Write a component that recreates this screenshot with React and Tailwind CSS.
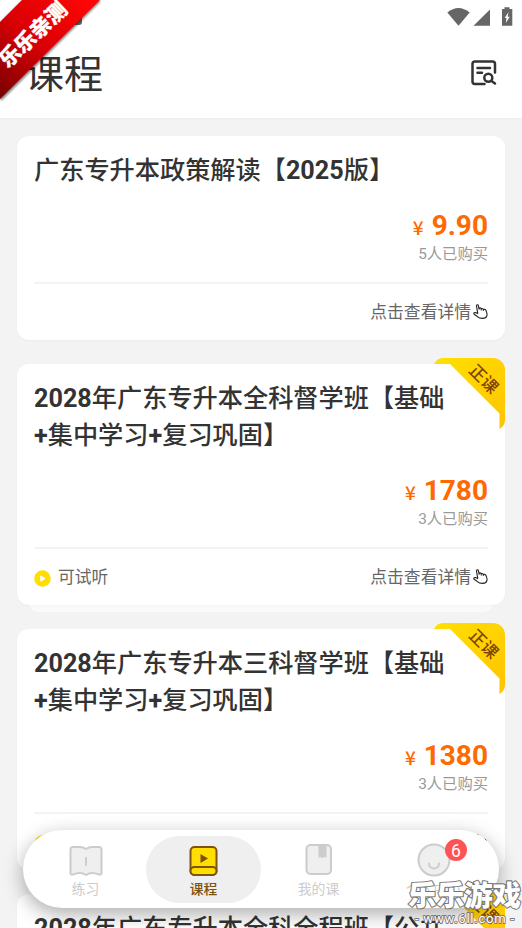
import React from "react";

const courses = [
  { title: "广东专升本政策解读【2025版】", price: "9.90", count: 5 },
  { title: "2028年广东专升本全科督学班【基础+集中学习+复习巩固】", price: "1780", count: 3, formal: true },
  { title: "2028年广东专升本三科督学班【基础+集中学习+复习巩固】", price: "1380", count: 3, formal: true },
  { title: "2028年广东专升本全科全程班【公共课+专业课】", price: "2380", count: 3, formal: true },
];

function HandIcon() {
  return (
    <svg className="-mt-[3px] h-[15px] w-[15px]" viewBox="0 0 15 15" fill="none" stroke="#222" strokeWidth="1.1" strokeLinecap="round" strokeLinejoin="round">
      <path d="M4.700 9.200L3.500 2C3.300.6 5.100.3 5.400 1.700L6.100 5.300V4.500C6.400 3.500 8 3.700 8.200 4.700V6V5C8.600 4.200 10 4.400 10.300 5.400V6.500V5.700C10.800 5 12.400 5.200 13 6.500C13.800 8.200 14.300 10 13.900 11.600C13.400 13.500 11.600 14.400 9.600 14.400C7 14.400 5.400 13.600 4 12.300L1.200 10.300C.3 9.300 1.200 8.200 2.400 8.500L4.700 9.600" />
    </svg>
  );
}

function PlayBadge() {
  return (
    <svg className="h-[17px] w-[17px]" viewBox="0 0 17 17">
      <circle cx="8.500" cy="8.500" r="8.300" fill="#ffde00" />
      <path d="M6.700 5.900v5.200l4.300-2.600z" fill="#fff" stroke="#fff" strokeWidth="1" strokeLinejoin="round" />
    </svg>
  );
}

function CornerTag({ id }) {
  return (
    <svg className="absolute -top-[6px] right-0 h-[72px] w-[72px]" viewBox="0 0 72 72">
      <defs>
        <linearGradient id={id} x1="0" y1="0" x2="1" y2="1">
          <stop offset="0" stopColor="#ffe000" />
          <stop offset="1" stopColor="#ffc400" />
        </linearGradient>
      </defs>
      <path d="M1 6C3 2 6 0 10 0H60A12 12 0 0 1 72 12V62C72 66 70 69 66.500 71V55.500L17 6Z" fill={`url(#${id})`} />
      <text x="51" y="27" transform="rotate(45 51 21)" textAnchor="middle" fontSize="16.500" fontWeight="500" fill="#7d4307">正课</text>
    </svg>
  );
}

function Title({ text }) {
  return (
    <h2 className="w-[418px] text-[25.200px] leading-[37px] font-medium text-[#333]">
      {text.split(/([0-9+]+)/).map((part, i) => (i % 2 ? <span key={i} className="font-bold">{part}</span> : part))}
    </h2>
  );
}

function CourseCard({ course, index }) {
  return (
    <article className="relative shrink-0">
      {course.formal && <div className="absolute inset-x-[12px] -bottom-[7px] h-[19px] rounded-[12px] bg-[#fafafa]" />}
      <div className="relative rounded-[12px] bg-white px-[17px] pt-[16px] shadow-[0_1px_2px_rgba(0,0,0,0.03)]">
        <Title text={course.title} />
        <div className="mt-[20px] flex h-[34px] items-center justify-end text-[#ff6a00]">
          <span className="mr-[8px] font-['Noto_Sans_CJK_SC',sans-serif] text-[19px] leading-none font-medium">¥</span>
          <span className="text-[28px] leading-none font-bold">{course.price}</span>
        </div>
        <p className="mt-px flex h-[20px] items-center justify-end text-[15.300px] text-[#999]">{course.count}人已购买</p>
        <div className="mt-[18px] h-[2px] bg-[#f3f3f3]" />
        <div className="flex h-[56px] items-center pt-[2px] text-[16.800px] text-[#666]">
          {course.formal && (
            <div className="flex items-center gap-[7px]">
              <span className="mt-px"><PlayBadge /></span>
              <span>可试听</span>
            </div>
          )}
          <div className="ml-auto flex items-center gap-[2px]">
            <span>点击查看详情</span>
            <HandIcon />
          </div>
        </div>
      </div>
      {course.formal && <CornerTag id={`tag-${index}`} />}
    </article>
  );
}

function StatusBar() {
  return (
    <svg className="ml-auto h-[30px] w-[80px]" viewBox="442 0 80 30">
      <path d="M447.300 12.500Q458.500 3.500 469.700 12.500L458.500 25.700Z" fill="#666" />
      <path d="M473.500 25.700L490 9.500V25.700Z" fill="#666" />
      <path d="M504.500 7.300H509.500V9H512.300V25.700H502V9H504.500Z" fill="#666" />
      <path d="M508.500 12L504.700 18H506.500L505.800 23L509.800 16.700H507.700Z" fill="#fff" />
    </svg>
  );
}

function OrdersIcon() {
  return (
    <svg className="h-[26px] w-[26px]" viewBox="0 0 26 26" fill="none" stroke="#333" strokeWidth="2.500" strokeLinecap="round" strokeLinejoin="round">
      <path d="M13.500 24H4Q1.500 24 1.500 21.500V4Q1.500 1.500 4 1.500H21.500Q24 1.500 24 4V12.500" />
      <path d="M6.500 8H19M6.500 12.800H11" />
      <circle cx="17.300" cy="17.800" r="4" />
      <path d="M20.500 21L24 23.500" />
    </svg>
  );
}

function PracticeIcon() {
  return (
    <svg className="h-[32px] w-[34px]" viewBox="0 0 34 32" fill="#efefef" stroke="#ccc" strokeWidth="2" strokeLinejoin="round" strokeLinecap="round">
      <path d="M1.500 4.500Q1.500 2 4 2H11Q14 2 17 4Q20 2 23 2H30Q32.500 2 32.500 4.500V28Q32.500 30 30 29.500Q26 28 23 28Q20 28 17 30Q14 28 11 28Q8 28 4 29.500Q1.500 30 1.500 28Z" />
      <path d="M17 13V20" />
    </svg>
  );
}

function CourseIcon() {
  return (
    <svg className="h-[32px] w-[30px]" viewBox="0.5 0 30 32" fill="#ffde00" stroke="#7d5310" strokeWidth="2">
      <rect x="2" y="2" width="26" height="28" rx="4" />
      <rect x="2" y="22" width="26" height="8" rx="4" />
      <path d="M12 9V18L19.500 13.500Z" fill="#7d5310" stroke="none" />
    </svg>
  );
}

function MyCourseIcon() {
  return (
    <svg className="-mt-[2px] h-[32px] w-[28px]" viewBox="0 0 28 32">
      <rect x="1.500" y="1" width="24.500" height="29" rx="4" fill="#efefef" stroke="#ccc" strokeWidth="2" />
      <path d="M13.500 1.500H21.500V14L20 13L17.500 14L15 13L13.500 14Z" fill="#ccc" />
    </svg>
  );
}

function ProfileIcon() {
  return (
    <svg className="-mt-[3px] h-[34px] w-[34px]" viewBox="0 0 34 34" fill="none" stroke="#ccc" strokeWidth="2" strokeLinecap="round">
      <circle cx="17" cy="17" r="15.500" fill="#efefef" />
      <path d="M12 20.500C12 27 22 27 22 20.500" />
    </svg>
  );
}

function NavItem({ icon, label, active, badge }) {
  return (
    <div className={active ? "relative flex h-[67px] w-[115px] flex-col items-center rounded-full bg-[#efefef] text-[#7d5310]" : "relative flex h-[67px] w-[115px] flex-col items-center text-[#ccc]"}>
      <div className="mt-[7px] flex h-[36px] items-center">{icon}</div>
      <span className={active ? "mt-px text-[13.800px] leading-[18px] font-medium" : "mt-px text-[13.800px] leading-[18px]"}>{label}</span>
      {badge && <span className="absolute top-[3px] left-[69px] flex h-[22px] w-[22px] items-center justify-center rounded-full bg-[#ff5252] pt-[2px] text-[17.500px] text-white">{badge}</span>}
    </div>
  );
}

function PromoRibbon() {
  return (
    <svg className="absolute top-0 left-0 h-[104px] w-[104px]" viewBox="0 0 104 104">
      <defs>
        <linearGradient id="promo" gradientUnits="userSpaceOnUse" x1="0" y1="95" x2="85" y2="0">
          <stop offset="0" stopColor="#7c0000" />
          <stop offset="0.500" stopColor="#d90006" />
          <stop offset="1" stopColor="#ff0505" />
        </linearGradient>
        <filter id="promoShade" x="-10%" y="-10%" width="120%" height="120%">
          <feGaussianBlur stdDeviation="1.200" />
        </filter>
      </defs>
      <path d="M23 0H100V2L2 100H0V23Z" fill="#000" opacity="0.500" filter="url(#promoShade)" />
      <path d="M22 0H100L0 99V22Z" fill="url(#promo)" />
      <text x="33" y="42" transform="rotate(-43.500 33 34.500)" textAnchor="middle" fontSize="21" fontWeight="900" fill="#fff" stroke="#fff" strokeWidth="0.300">乐乐亲测</text>
    </svg>
  );
}

function SiteMark() {
  return (
    <svg className="absolute right-0 bottom-0 h-[50px] w-[118px]" viewBox="404 878 118 50" fill="#fff" stroke="#777" strokeLinejoin="round" paintOrder="stroke">
      <text x="408" y="906" fontSize="28.500" fontWeight="900" strokeWidth="2.200" textLength="113">乐乐游戏</text>
      <text x="415" y="922.500" fontSize="13" strokeWidth="1.800" textLength="99">- www.6ll.com -</text>
    </svg>
  );
}

export default function App() {
  return (
    <div className="relative flex h-[928px] w-[522px] flex-col overflow-hidden bg-[#f3f3f3] font-[Roboto,'Noto_Sans_CJK_SC',sans-serif]">
      <header className="h-[118px] shrink-0 bg-white shadow-[0_0_2px_rgba(0,0,0,0.06)]">
        <div className="flex h-[30px]">
          <span className="mt-[12px] ml-[69px] h-[13px] w-[13px] rounded-[3px] bg-[#666]" />
          <StatusBar />
        </div>
        <div className="flex h-[88px] items-center justify-between pr-[25px] pb-[2px] pl-[25px]">
          <h1 className="pt-[5px] text-[39px] leading-none text-[#333]">课程</h1>
          <OrdersIcon />
        </div>
      </header>
      <main className="flex flex-col gap-[24px] px-[17px] pt-[18px]">
        {courses.map((course, i) => <CourseCard key={course.title} course={course} index={i} />)}
      </main>
      <nav className="absolute top-[830px] left-[23px] flex h-[78px] w-[476px] rounded-full bg-white pt-[6px] pl-[5px] shadow-[0_6px_20px_rgba(0,0,0,0.33)]">
        <NavItem icon={<PracticeIcon />} label="练习" />
        <div className="ml-[3px]">
          <NavItem icon={<CourseIcon />} label="课程" active />
        </div>
        <NavItem icon={<MyCourseIcon />} label="我的课" />
        <NavItem icon={<ProfileIcon />} label="个人中心" badge="6" />
      </nav>
      <PromoRibbon />
      <SiteMark />
    </div>
  );
}
